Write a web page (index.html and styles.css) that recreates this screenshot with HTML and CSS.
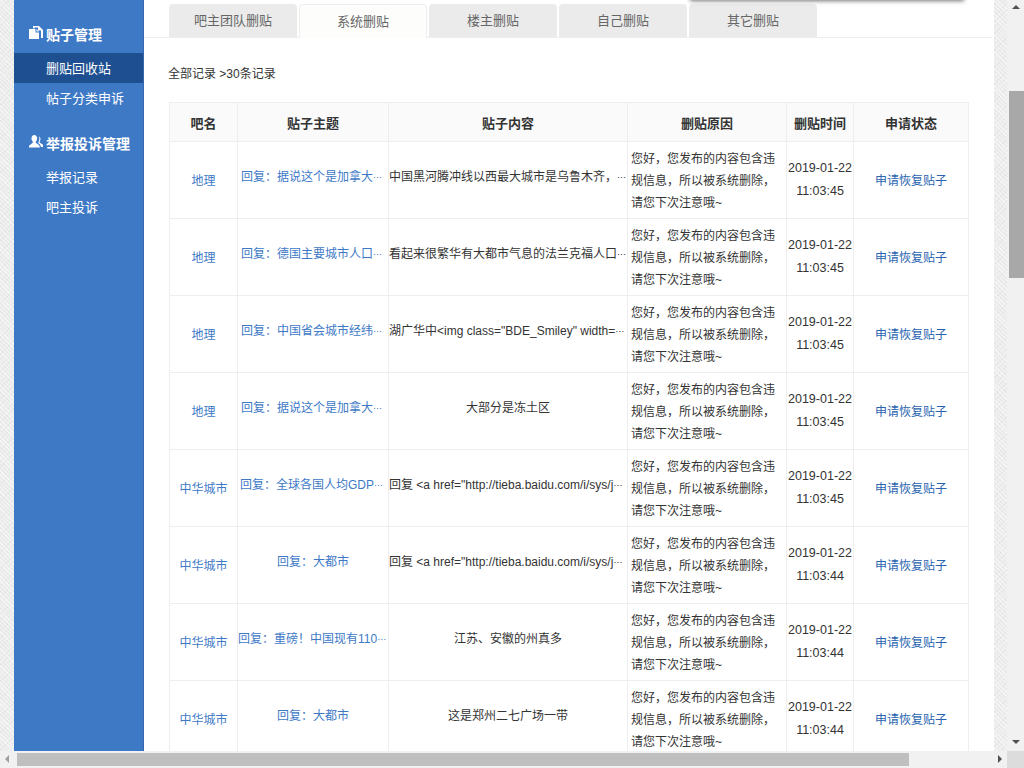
FILE: index.html
```html
<!DOCTYPE html>
<html lang="zh-CN">

<head>
    <meta charset="UTF-8">
    <title>贴子管理 - 删贴回收站</title>
    <link rel="stylesheet" href="styles.css">
</head>

<body>
    <div class="page">
        <div class="sidebar">
            <h3 class="side-title">
                <svg class="side-icon" viewBox="0 0 14 14"><path d="M4 0h6l1 1 3 3v8h-2V4.500H9V1.500H5.500V2.500H4z" fill="#fff"/><path d="M0 3h6.500v3.500H10V13H0z" fill="#fff"/><path d="M7.500 3 10 5.500H7.500z" fill="#fff"/></svg>
                贴子管理
            </h3>
            <a class="side-item active">删贴回收站</a>
            <a class="side-item">帖子分类申诉</a>
            <h3 class="side-title second">
                <svg class="side-icon" viewBox="0 0 14 14"><path d="M2.500 3.500C2.500 1.500 3.700 0 5.300 0s2.800 1.500 2.800 3.500c0 1.300-.6 2.500-1.300 3.100v1.100L10 10l1 2.500H0v-1.800l3.800-3V6.600c-.7-.6-1.300-1.800-1.300-3.100z" fill="#fff"/><path d="M8.800 1.500C10.300 1 11.500 2.200 11.500 4c0 1-.4 1.900-.9 2.500v1l3.400 2.300V12h-2l-1-2.500-1.600-1.300V6.800c.6-.7 1-2 1-3.300 0-.7-.2-1.400-.6-2z" fill="#fff"/></svg>
                举报投诉管理
            </h3>
            <a class="side-item">举报记录</a>
            <a class="side-item">吧主投诉</a>
        </div>

        <div class="main">
            <div class="tabs">
                <a class="tab">吧主团队删贴</a>
                <a class="tab active">系统删贴</a>
                <a class="tab">楼主删贴</a>
                <a class="tab">自己删贴</a>
                <a class="tab">其它删贴</a>
            </div>

            <p class="crumb">全部记录 &gt;30条记录</p>

            <table class="records">
                <colgroup>
                    <col class="c-bar"><col class="c-topic"><col class="c-body"><col class="c-reason"><col class="c-time"><col class="c-state">
                </colgroup>
                <tr>
                    <th>吧名</th><th>贴子主题</th><th>贴子内容</th><th>删贴原因</th><th>删贴时间</th><th>申请状态</th>
                </tr>
                <tr>
                    <td><a class="link">地理</a></td>
                    <td><div class="clip long link"><span>回复&#xFF1A;据说这个是加拿大人口密度分布图</span></div></td>
                    <td><div class="clip"><span>中国黑河腾冲线以西最大城市是乌鲁木齐&#xFF0C;西宁兰州都在线以东的地方</span></div></td>
                    <td class="reason">您好&#xFF0C;您发布的内容包含违规信息&#xFF0C;所以被系统删除&#xFF0C;请您下次注意哦~</td>
                    <td class="time">2019-01-22<br>11:03:45</td>
                    <td><a class="apply">申请恢复贴子</a></td>
                </tr>
                <tr>
                    <td><a class="link">地理</a></td>
                    <td><div class="clip long link"><span>回复&#xFF1A;德国主要城市人口分布情况一览表</span></div></td>
                    <td><div class="clip"><span>看起来很繁华有大都市气息的法兰克福人口却并不算多的样子</span></div></td>
                    <td class="reason">您好&#xFF0C;您发布的内容包含违规信息&#xFF0C;所以被系统删除&#xFF0C;请您下次注意哦~</td>
                    <td class="time">2019-01-22<br>11:03:45</td>
                    <td><a class="apply">申请恢复贴子</a></td>
                </tr>
                <tr>
                    <td><a class="link">地理</a></td>
                    <td><div class="clip long link"><span>回复&#xFF1A;中国省会城市经纬度位置一览表</span></div></td>
                    <td><div class="clip"><span>湖广华中&lt;img class="BDE_Smiley" width="30" height="30"&gt;</span></div></td>
                    <td class="reason">您好&#xFF0C;您发布的内容包含违规信息&#xFF0C;所以被系统删除&#xFF0C;请您下次注意哦~</td>
                    <td class="time">2019-01-22<br>11:03:45</td>
                    <td><a class="apply">申请恢复贴子</a></td>
                </tr>
                <tr>
                    <td><a class="link">地理</a></td>
                    <td><div class="clip long link"><span>回复&#xFF1A;据说这个是加拿大人口密度分布图</span></div></td>
                    <td><div class="clip short"><span>大部分是冻土区</span></div></td>
                    <td class="reason">您好&#xFF0C;您发布的内容包含违规信息&#xFF0C;所以被系统删除&#xFF0C;请您下次注意哦~</td>
                    <td class="time">2019-01-22<br>11:03:45</td>
                    <td><a class="apply">申请恢复贴子</a></td>
                </tr>
                <tr>
                    <td><a class="link">中华城市</a></td>
                    <td><div class="clip long2 link"><span>回复&#xFF1A;全球各国人均GDP排名最新统计</span></div></td>
                    <td><div class="clip"><span>回复 &lt;a href="http://tieba.baidu.com/i/sys/jump?un=abc"&gt;</span></div></td>
                    <td class="reason">您好&#xFF0C;您发布的内容包含违规信息&#xFF0C;所以被系统删除&#xFF0C;请您下次注意哦~</td>
                    <td class="time">2019-01-22<br>11:03:45</td>
                    <td><a class="apply">申请恢复贴子</a></td>
                </tr>
                <tr>
                    <td><a class="link">中华城市</a></td>
                    <td><div class="clip short link"><span>回复&#xFF1A;大都市</span></div></td>
                    <td><div class="clip"><span>回复 &lt;a href="http://tieba.baidu.com/i/sys/jump?un=abc"&gt;</span></div></td>
                    <td class="reason">您好&#xFF0C;您发布的内容包含违规信息&#xFF0C;所以被系统删除&#xFF0C;请您下次注意哦~</td>
                    <td class="time">2019-01-22<br>11:03:44</td>
                    <td><a class="apply">申请恢复贴子</a></td>
                </tr>
                <tr>
                    <td><a class="link">中华城市</a></td>
                    <td><div class="clip link"><span>回复&#xFF1A;重磅&#xFF01;中国现有110座大城市名单公布</span></div></td>
                    <td><div class="clip short"><span>江苏、安徽的州真多</span></div></td>
                    <td class="reason">您好&#xFF0C;您发布的内容包含违规信息&#xFF0C;所以被系统删除&#xFF0C;请您下次注意哦~</td>
                    <td class="time">2019-01-22<br>11:03:44</td>
                    <td><a class="apply">申请恢复贴子</a></td>
                </tr>
                <tr>
                    <td><a class="link">中华城市</a></td>
                    <td><div class="clip short link"><span>回复&#xFF1A;大都市</span></div></td>
                    <td><div class="clip short"><span>这是郑州二七广场一带</span></div></td>
                    <td class="reason">您好&#xFF0C;您发布的内容包含违规信息&#xFF0C;所以被系统删除&#xFF0C;请您下次注意哦~</td>
                    <td class="time">2019-01-22<br>11:03:44</td>
                    <td><a class="apply">申请恢复贴子</a></td>
                </tr>
            </table>
        </div>
    </div>

    <div class="dropdown-shadow"></div>

    <div class="scroll-v">
        <i class="arrow arrow-up"></i>
        <div class="thumb-v"></div>
        <i class="arrow arrow-down"></i>
    </div>
    <div class="scroll-h">
        <i class="arrow arrow-left"></i>
        <div class="thumb-h"></div>
        <i class="arrow arrow-right"></i>
    </div>
    <div class="scroll-corner"></div>
</body>

</html>
```

FILE: styles.css
```css
html, body {
    height: 100%;
}

body {
    margin: 0;
    height: 768px;
    overflow: hidden;
    position: relative;
    font-family: "Liberation Sans", "Noto Sans CJK SC", sans-serif;
    font-size: 12px;
    color: #333;
    background-color: #ececec;
    background-image:
        repeating-linear-gradient(45deg, rgba(255, 255, 255, 0.5) 0 1px, transparent 1px 3px),
        repeating-linear-gradient(-45deg, rgba(0, 0, 0, 0.03) 0 1px, transparent 1px 4px);
}

.page {
    display: flex;
    height: 751px;
    margin-left: 14px;
    width: 980px;
    overflow: hidden;
}

/* left menu */
.sidebar {
    flex: 0 0 130px;
    box-sizing: border-box;
    padding-top: 19px;
    background-color: #3e79c6;
    border-right: 1px solid #3566ae;
}

.side-title {
    display: flex;
    align-items: center;
    height: 30px;
    margin: 0 0 4px;
    padding-left: 15px;
    font-size: 14px;
    font-weight: bold;
    color: #fff;
}

.side-title.second {
    margin-top: 15px;
}

.side-icon {
    width: 14px;
    height: 14px;
    margin-right: 3px;
    margin-top: -2px;
}

.side-item {
    display: block;
    height: 30px;
    line-height: 31px;
    padding-left: 32px;
    font-size: 13px;
    color: #fff;
}

.side-item.active {
    background-color: #1d4f91;
}

/* content */
.main {
    flex: 0 0 850px;
    background-color: #fff;
    overflow: hidden;
}

.tabs {
    display: flex;
    gap: 2px;
    height: 33px;
    padding: 4px 0 0 25px;
    margin-right: 2px;
    border-bottom: 1px solid #eee;
}

.tab {
    box-sizing: border-box;
    width: 128px;
    height: 33px;
    line-height: 34px;
    text-align: center;
    font-size: 13px;
    color: #666;
    background-color: #ebebeb;
    border-radius: 4px 4px 0 0;
}

.tab.active {
    height: 34px;
    background-color: #fdfdfb;
    border: 1px solid #eee;
    border-bottom: none;
    line-height: 33px;
}

.crumb {
    margin: 27px 0 19px 24px;
    height: 18px;
    line-height: 18px;
}

.records {
    margin-left: 25px;
    width: 799px;
    table-layout: fixed;
    border-collapse: collapse;
}

.c-bar { width: 68px; }
.c-topic { width: 151px; }
.c-body { width: 239px; }
.c-reason { width: 159px; }
.c-time { width: 67px; }
.c-state { width: 115px; }

.records th,
.records td {
    border: 1px solid #eee;
    padding: 0;
    text-align: center;
}

.records th {
    height: 38px;
    font-size: 13px;
    font-weight: bold;
    background-color: #fafafa;
}

.records td {
    box-sizing: border-box;
    height: 77px;
    padding-bottom: 2px;
}

.link {
    color: #3e79c6;
}

.apply {
    color: #2a64b0;
}

/* long text stays on one line, the dots come from the CJK font so they sit mid height */
.clip {
    font-family: "Noto Sans CJK SC", sans-serif;
    font-size: 9px;
    line-height: 18px;
    white-space: nowrap;
    overflow: hidden;
    text-overflow: ellipsis;
    text-align: left;
    padding-bottom: 4px;
}

.clip span {
    font-family: "Liberation Sans", "Noto Sans CJK SC", sans-serif;
    font-size: 12px;
}

.clip.long {
    padding-left: 3px;
    padding-right: 2px;
}

.clip.long2 {
    padding-left: 2px;
    padding-right: 2px;
}

.clip.short {
    text-align: center;
}

.records td.reason {
    padding: 1px 9px 0 3px;
    text-align: left;
    line-height: 22px;
}

.records td.time {
    padding-bottom: 0;
    font-size: 12.5px;
    line-height: 23px;
}

/* fake browser scrollbars */
.scroll-v {
    position: absolute;
    left: 1007px;
    top: 0;
    width: 17px;
    height: 751px;
    background-color: #f1f1f1;
}

.thumb-v {
    position: absolute;
    left: 2px;
    right: 0;
    top: 91px;
    height: 187px;
    background-color: #a8a8a8;
}

.scroll-h {
    position: absolute;
    left: 0;
    top: 751px;
    width: 1007px;
    height: 17px;
    background-color: #f1f1f1;
}

.thumb-h {
    position: absolute;
    left: 17px;
    top: 2px;
    width: 892px;
    height: 13px;
    background-color: #bfbfbf;
}

.scroll-corner {
    position: absolute;
    left: 1007px;
    top: 751px;
    width: 17px;
    height: 17px;
    background-color: #dcdcdc;
}

.arrow {
    position: absolute;
    width: 0;
    height: 0;
    border: 4px solid transparent;
}

.arrow-up {
    left: 5px;
    top: 5px;
    border-top-width: 0;
    border-bottom-color: #505050;
}

.arrow-down {
    left: 5px;
    bottom: 7px;
    border-bottom-width: 0;
    border-top-color: #505050;
}

.arrow-left {
    left: 5px;
    top: 4px;
    border-left-width: 0;
    border-right-color: #a0a0a0;
}

.arrow-right {
    right: 5px;
    top: 4px;
    border-right-width: 0;
    border-left-color: #505050;
}

/* edge of a dropdown scrolled off the top */
.dropdown-shadow {
    position: absolute;
    left: 690px;
    top: -10px;
    width: 274px;
    height: 10px;
    background-color: #aaa;
    box-shadow: 0 1px 4px rgba(0, 0, 0, 0.55);
}
```
